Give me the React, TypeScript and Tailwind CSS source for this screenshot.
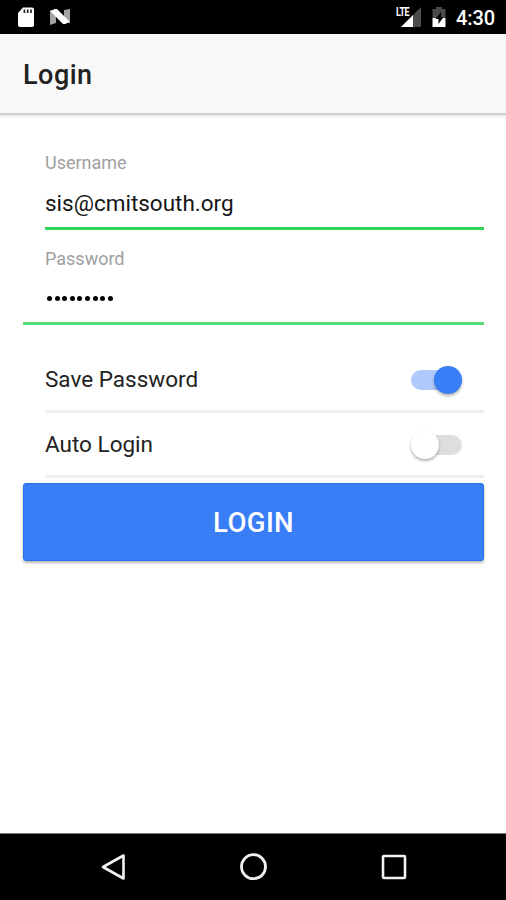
import { useState } from "react";
import clsx from "clsx";

export default function App() {
  const [username, setUsername] = useState("sis@cmitsouth.org");
  const [savePassword, setSavePassword] = useState(true);
  const [autoLogin, setAutoLogin] = useState(false);

  return (
    <div className="flex h-[900px] w-[506px] flex-col overflow-hidden bg-white font-[Roboto,sans-serif] text-black">
      <StatusBar />
      <header className="flex h-[81px] shrink-0 items-center border-b-2 border-[#cfcfcf] bg-[#f8f8f8] pt-[3px] pl-[23px] shadow-[0_1px_3px_rgba(0,0,0,0.14)]">
        <h1 className="text-[27px] leading-none font-medium tracking-[0.5px] text-[#222]">Login</h1>
      </header>

      <main className="flex-1 pr-[22px] pl-[23px]">
        <label className="mt-[37px] ml-[22px] block h-[78px] border-b-[3px] border-[#32d356]">
          <span className="block h-[22px] text-[18px] leading-[22px] text-[#a0a0a0]">Username</span>
          <input
            className="mt-[14px] block h-[30px] w-full bg-transparent text-[22.5px] leading-[30px] text-[#161616] outline-none"
            value={username}
            onChange={(e) => setUsername(e.target.value)}
          />
        </label>

        <div className="h-[95px] border-b-[3px] border-[#56db75] pt-[18px] pl-[22px]">
          <span className="block h-[22px] text-[18px] leading-[22px] text-[#a0a0a0]">Password</span>
          <PasswordDots count={9} />
        </div>

        <div className="mt-[23px] ml-[22px]">
          <ToggleRow label="Save Password" checked={savePassword} onChange={setSavePassword} />
          <ToggleRow label="Auto Login" checked={autoLogin} onChange={setAutoLogin} />
        </div>

        <button className="mt-[5px] block h-[78px] w-full rounded-[3px] border border-[#2472ea] bg-[#397ef6] pt-px text-[27.5px] leading-none font-medium tracking-[0.4px] text-white shadow-[0_2px_3px_rgba(0,0,0,0.28)]">
          LOGIN
        </button>
      </main>

      <NavBar />
    </div>
  );
}

function StatusBar() {
  return (
    <div className="flex h-[34px] shrink-0 items-center bg-black pr-[11px] pl-[17px] text-white">
      <svg width="18" height="21" viewBox="0 0 18 21" className="mt-px">
        <path d="M6 0.5h9q2 0 2 2V18q0 2-2 2H3q-2 0-2-2V6z" fill="#fff" />
        <path d="M7.4 2.5v3.6M10.7 2.5v3.6M14 2.5v3.6" stroke="#222" strokeWidth="1.7" />
      </svg>
      <svg width="22" height="18" viewBox="0 0 22 18" className="ml-[14px]">
        <path d="M1 2l6 4v9l-6 2zM21 1v14l-6-4V2z" fill="#a3a3a3" />
        <path d="M1 3l5-2h2l13 13-5 2h-2z" fill="#fff" />
      </svg>
      <div className="relative ml-auto h-[24px] w-[28px]">
        <svg width="28" height="24" viewBox="0 0 28 24">
          <path d="M28 2v20H8z" fill="#4b4b4b" />
          <path d="M20 10v12H8z" fill="#fff" />
        </svg>
        <span className="absolute top-[2px] left-[3px] origin-left scale-x-75 bg-black pr-px text-[12px] leading-[11px] font-bold tracking-[-0.6px]">
          LTE
        </span>
      </div>
      <svg width="15" height="21" viewBox="0 0 15 21" className="mt-px ml-[11px]">
        <path d="M4 0h6v2h3.5v9H0.5V2H4z" fill="#4b4b4b" />
        <path d="M0.5 11h13v9H0.5z" fill="#fff" />
        <path d="M9 5L3.5 12h3v5l5-7H9z" fill="#000" />
      </svg>
      <span className="mt-px ml-[9px] text-[20px] leading-none font-medium tracking-[-0.1px]">4:30</span>
    </div>
  );
}

function PasswordDots({ count }: { count: number }) {
  return (
    <div className="mt-[26px] ml-[2px] flex h-[5px] gap-[2.6px]">
      {Array.from({ length: count }, (_, i) => (
        <span key={i} className="size-[5px] rounded-full bg-black" />
      ))}
    </div>
  );
}

type ToggleRowProps = { label: string; checked: boolean; onChange: (value: boolean) => void };

function ToggleRow({ label, checked, onChange }: ToggleRowProps) {
  return (
    <div className="flex h-[65px] items-center justify-between border-b-[3px] border-[#efefef] pt-[2px] pr-[22px]">
      <span className="pb-[2px] text-[22.5px] leading-[30px] text-[#222]">{label}</span>
      <button
        role="switch"
        aria-checked={checked}
        aria-label={label}
        onClick={() => onChange(!checked)}
        className={clsx("flex h-[20px] w-[51px] items-center rounded-full", checked ? "justify-end bg-[#afcbfb]" : "bg-[#dedede]")}
      >
        <span
          className={clsx(
            "size-[28px] shrink-0 rounded-full shadow-[0_2px_3px_rgba(0,0,0,0.3)]",
            checked ? "bg-[#397ef6]" : "bg-white"
          )}
        />
      </button>
    </div>
  );
}

function NavBar() {
  return (
    <nav className="flex h-[67px] shrink-0 items-center justify-between border-t border-[#777] bg-black pr-[98px] pl-[99px]">
      <svg width="28" height="28" viewBox="0 0 28 28" fill="none" stroke="#f2f2f2" strokeWidth="2.6">
        <path d="M24.5 2.5v23L4 14z" strokeLinejoin="round" />
      </svg>
      <svg width="28" height="28" viewBox="0 0 28 28" fill="none" stroke="#f2f2f2" strokeWidth="2.8">
        <circle cx="13.5" cy="13.7" r="12" />
      </svg>
      <svg width="28" height="28" viewBox="0 0 28 28" fill="none" stroke="#f2f2f2" strokeWidth="2.6">
        <rect x="3" y="3" width="22" height="22" rx="1" />
      </svg>
    </nav>
  );
}
